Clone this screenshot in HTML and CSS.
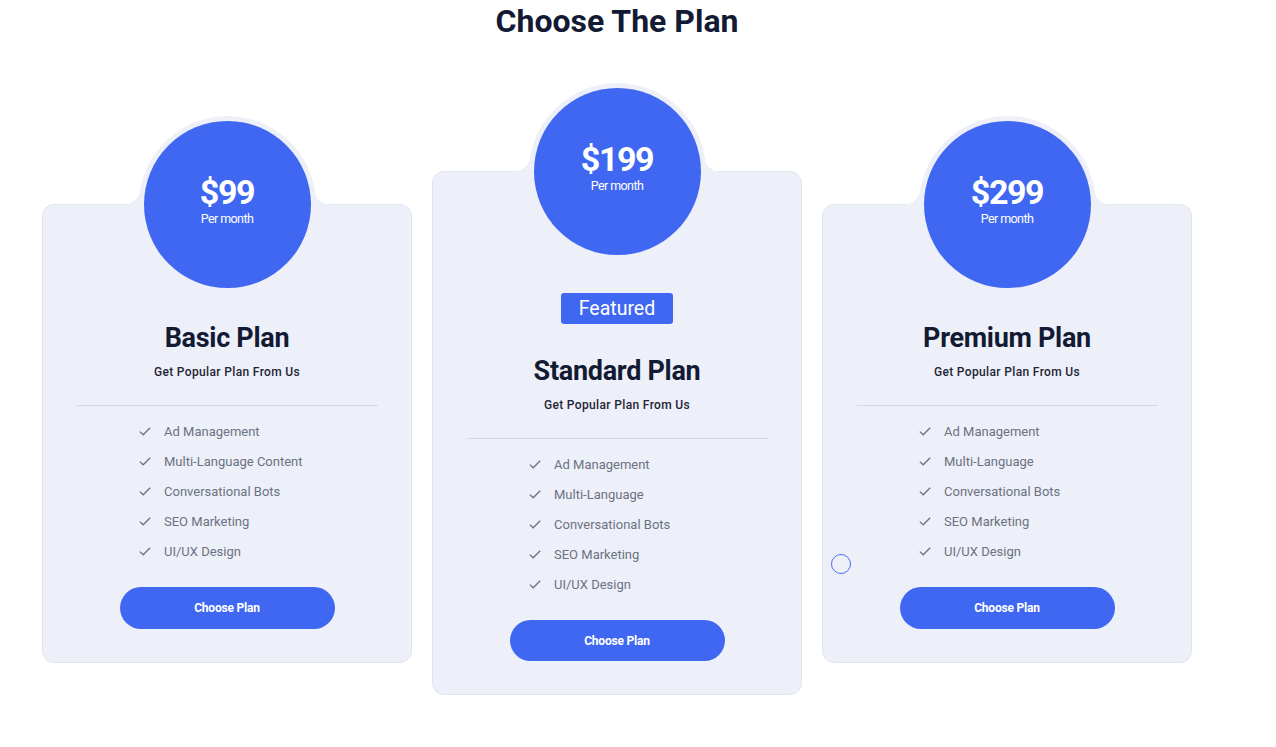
FILE: index.html
```html
<!DOCTYPE html>
<html lang="en">
<head>
<meta charset="utf-8">
<title>Choose The Plan</title>
<link rel="stylesheet" href="styles.css">
</head>
<body>
<main class="page">
  <h1 class="page-title">Choose The Plan</h1>
  <div class="plans">
    <section class="card">
      <div class="price"><span class="amount">$99</span><span class="period">Per month</span></div>
      <h2 class="plan-name">Basic Plan</h2>
      <p class="plan-sub">Get Popular Plan From Us</p>
      <hr class="divider">
      <ul class="features">
        <li><svg class="check" viewBox="0 0 12 9"><path d="M0.8 4.6 L4.2 7.8 L11.2 0.8"/></svg>Ad Management</li>
        <li><svg class="check" viewBox="0 0 12 9"><path d="M0.8 4.6 L4.2 7.8 L11.2 0.8"/></svg>Multi-Language Content</li>
        <li><svg class="check" viewBox="0 0 12 9"><path d="M0.8 4.6 L4.2 7.8 L11.2 0.8"/></svg>Conversational Bots</li>
        <li><svg class="check" viewBox="0 0 12 9"><path d="M0.8 4.6 L4.2 7.8 L11.2 0.8"/></svg>SEO Marketing</li>
        <li><svg class="check" viewBox="0 0 12 9"><path d="M0.8 4.6 L4.2 7.8 L11.2 0.8"/></svg>UI/UX Design</li>
      </ul>
      <a class="btn" href="#">Choose Plan</a>
    </section>
    <section class="card card-featured">
      <div class="price"><span class="amount">$199</span><span class="period">Per month</span></div>
      <span class="tag">Featured</span>
      <h2 class="plan-name">Standard Plan</h2>
      <p class="plan-sub">Get Popular Plan From Us</p>
      <hr class="divider">
      <ul class="features">
        <li><svg class="check" viewBox="0 0 12 9"><path d="M0.8 4.6 L4.2 7.8 L11.2 0.8"/></svg>Ad Management</li>
        <li><svg class="check" viewBox="0 0 12 9"><path d="M0.8 4.6 L4.2 7.8 L11.2 0.8"/></svg>Multi-Language</li>
        <li><svg class="check" viewBox="0 0 12 9"><path d="M0.8 4.6 L4.2 7.8 L11.2 0.8"/></svg>Conversational Bots</li>
        <li><svg class="check" viewBox="0 0 12 9"><path d="M0.8 4.6 L4.2 7.8 L11.2 0.8"/></svg>SEO Marketing</li>
        <li><svg class="check" viewBox="0 0 12 9"><path d="M0.8 4.6 L4.2 7.8 L11.2 0.8"/></svg>UI/UX Design</li>
      </ul>
      <a class="btn" href="#">Choose Plan</a>
    </section>
    <section class="card">
      <div class="price"><span class="amount">$299</span><span class="period">Per month</span></div>
      <h2 class="plan-name">Premium Plan</h2>
      <p class="plan-sub">Get Popular Plan From Us</p>
      <hr class="divider">
      <ul class="features">
        <li><svg class="check" viewBox="0 0 12 9"><path d="M0.8 4.6 L4.2 7.8 L11.2 0.8"/></svg>Ad Management</li>
        <li><svg class="check" viewBox="0 0 12 9"><path d="M0.8 4.6 L4.2 7.8 L11.2 0.8"/></svg>Multi-Language</li>
        <li><svg class="check" viewBox="0 0 12 9"><path d="M0.8 4.6 L4.2 7.8 L11.2 0.8"/></svg>Conversational Bots</li>
        <li><svg class="check" viewBox="0 0 12 9"><path d="M0.8 4.6 L4.2 7.8 L11.2 0.8"/></svg>SEO Marketing</li>
        <li><svg class="check" viewBox="0 0 12 9"><path d="M0.8 4.6 L4.2 7.8 L11.2 0.8"/></svg>UI/UX Design</li>
      </ul>
      <a class="btn" href="#">Choose Plan</a>
    </section>
  </div>
</main>
<span class="cursor-ring"></span>
</body>
</html>
```

FILE: styles.css
```css
* { box-sizing: border-box; }

body {
  margin: 0;
  background: #ffffff;
  font-family: Roboto, "Liberation Sans", Arial, sans-serif;
  color: #141b34;
}

.page {
  width: 1150px;
  margin-left: 42px;
}

.page-title {
  margin: 0;
  font-size: 32px;
  line-height: 42px;
  font-weight: 700;
  text-align: center;
  color: #131a33;
}

.plans {
  display: flex;
  gap: 20px;
  align-items: flex-start;
  margin-top: 129px;
}

.card {
  position: relative;
  width: 370px;
  background: #edf0f8;
  border: 1px solid #e1e5ef;
  border-radius: 12px;
  display: flex;
  flex-direction: column;
  align-items: center;
  padding-bottom: 33px;
  margin-top: 33px;
}

.card-featured { margin-top: 0; }

.card::before,
.card::after {
  content: "";
  position: absolute;
  top: -18px;
  width: 22px;
  height: 18px;
}
.card::before {
  left: 80px;
  background: radial-gradient(circle at 0 0, transparent 17.5px, #edf0f8 18px);
}
.card::after {
  right: 80px;
  background: radial-gradient(circle at 100% 0, transparent 17.5px, #edf0f8 18px);
}

.price {
  position: relative;
  z-index: 1;
  width: 167px;
  height: 167px;
  margin-top: -84px;
  border-radius: 50%;
  background: #4067f2;
  box-shadow: 0 0 0 5px #edf0f8;
  display: flex;
  flex-direction: column;
  align-items: center;
  justify-content: center;
  padding-bottom: 10px;
  color: #ffffff;
}

.amount {
  font-size: 34px;
  line-height: 38px;
  font-weight: 700;
  letter-spacing: -1.4px;
}

.period {
  font-size: 12.5px;
  line-height: 16px;
  letter-spacing: -0.6px;
}

.tag {
  margin-top: 38px;
  height: 31px;
  padding: 0 18px;
  line-height: 31px;
  border-radius: 3px;
  background: #4067f2;
  color: #ffffff;
  font-size: 19.5px;
  font-weight: 400;
}

.plan-name {
  margin: 33px 0 0;
  font-size: 27px;
  line-height: 34px;
  font-weight: 700;
  color: #131a33;
  letter-spacing: -0.3px;
}

.tag + .plan-name { margin-top: 30px; }

.plan-sub {
  margin: 9px 0 0;
  font-size: 12px;
  line-height: 16px;
  font-weight: 500;
  color: #1f2537;
  letter-spacing: 0.35px;
}

.divider {
  width: 301px;
  margin: 25px 0 0;
  border: 0;
  border-top: 1px solid #d6d9e1;
}

.features {
  align-self: stretch;
  list-style: none;
  margin: 10px 0 0;
  padding: 0 0 0 96px;
}

.features li {
  display: flex;
  align-items: center;
  height: 30px;
  font-size: 13px;
  color: #6c7283;
}

.check {
  width: 12px;
  height: 9px;
  margin-right: 13px;
  fill: none;
  stroke: #6c7283;
  stroke-width: 1.3;
}

.btn {
  display: flex;
  align-items: center;
  justify-content: center;
  width: 215px;
  height: 42px;
  margin-top: 21px;
  border-radius: 21px;
  background: #4067f2;
  color: #ffffff;
  font-size: 12px;
  font-weight: 700;
  letter-spacing: -0.2px;
  text-decoration: none;
}

.card-featured .btn { height: 41px; }

.cursor-ring {
  position: absolute;
  left: 831px;
  top: 554px;
  width: 20px;
  height: 20px;
  border: 1.5px solid #4a6ff2;
  border-radius: 50%;
}
```
